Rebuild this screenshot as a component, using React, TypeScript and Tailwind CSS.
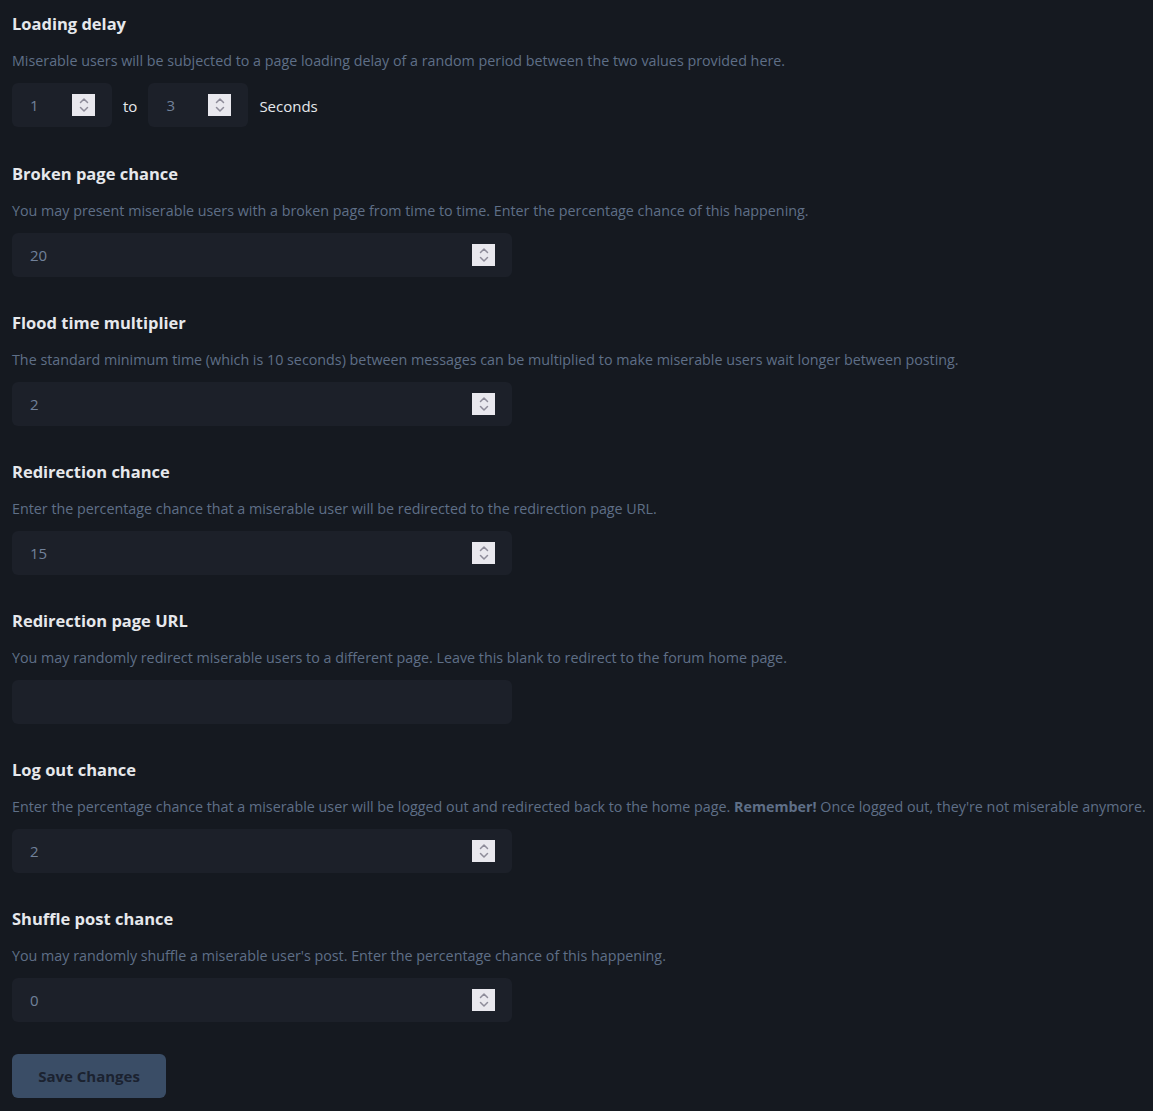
import React from "react";

const numCls =
  "h-11 rounded-md bg-[#1c2029] pl-[18px] pr-[40px] text-[15px] text-[#71819a] outline-none [appearance:textfield] [&::-webkit-inner-spin-button]:appearance-none [&::-webkit-outer-spin-button]:appearance-none";

function Spinner() {
  return (
    <div className="pointer-events-none absolute right-[17px] top-1/2 flex h-[22px] w-[23px] -translate-y-1/2 items-center justify-center bg-[#e9e8ee]">
      <svg width="12" height="16" viewBox="0 0 12 16" fill="none" stroke="#8e8c9a" strokeWidth="1.5" strokeLinecap="round" strokeLinejoin="round">
        <path d="M2.5 5.5 L6 2 L9.5 5.5" />
        <path d="M2.5 10.5 L6 14 L9.5 10.5" />
      </svg>
    </div>
  );
}

function NumInput({ value, wide = true }: { value: number; wide?: boolean }) {
  return (
    <div className={"relative " + (wide ? "w-[500px]" : "w-[100px]")}>
      <input type="number" defaultValue={value} className={numCls + " w-full"} />
      <Spinner />
    </div>
  );
}

function Section({
  title,
  desc,
  children,
}: {
  title: string;
  desc: React.ReactNode;
  children: React.ReactNode;
}) {
  return (
    <div className="flex flex-col">
      <h2 className="text-[16.5px] leading-[28px] font-bold text-[#e6e8ec]">{title}</h2>
      <p className="mt-[13px] whitespace-nowrap text-[14.3px] leading-[20px] text-[#5f6f87]">{desc}</p>
      <div className="mt-[12px]">{children}</div>
    </div>
  );
}

export default function App() {
  return (
    <div
      className="min-h-[1111px] w-full bg-[#151920] pl-[12px] pt-[10px] pb-[14px]"
      style={{ fontFamily: '"Open Sans", "Noto Sans", sans-serif' }}
    >
      <div className="flex flex-col gap-[32px]">
        <Section
          title="Loading delay"
          desc="Miserable users will be subjected to a page loading delay of a random period between the two values provided here."
        >
          <div className="mb-[1px] flex items-center">
            <NumInput value={1} wide={false} />
            <span className="mx-[11px] pt-[3px] text-[15px] text-[#e6e8ec]">to</span>
            <NumInput value={3} wide={false} />
            <span className="ml-[11px] pt-[3px] text-[15px] text-[#e6e8ec]">Seconds</span>
          </div>
        </Section>
        <Section
          title="Broken page chance"
          desc="You may present miserable users with a broken page from time to time. Enter the percentage chance of this happening."
        >
          <NumInput value={20} />
        </Section>
        <Section
          title="Flood time multiplier"
          desc="The standard minimum time (which is 10 seconds) between messages can be multiplied to make miserable users wait longer between posting."
        >
          <NumInput value={2} />
        </Section>
        <Section
          title="Redirection chance"
          desc="Enter the percentage chance that a miserable user will be redirected to the redirection page URL."
        >
          <NumInput value={15} />
        </Section>
        <Section
          title="Redirection page URL"
          desc="You may randomly redirect miserable users to a different page. Leave this blank to redirect to the forum home page."
        >
          <input
            type="text"
            defaultValue=""
            className="h-11 w-[500px] rounded-md bg-[#1c2029] px-[18px] text-[15px] text-[#71819a] outline-none"
          />
        </Section>
        <Section
          title="Log out chance"
          desc={
            <>
              Enter the percentage chance that a miserable user will be logged out and redirected back to the home page.{" "}
              <strong className="font-bold">Remember!</strong> Once logged out, they're not miserable anymore.
            </>
          }
        >
          <NumInput value={2} />
        </Section>
        <Section
          title="Shuffle post chance"
          desc="You may randomly shuffle a miserable user's post. Enter the percentage chance of this happening."
        >
          <NumInput value={0} />
        </Section>
        <div>
          <button className="h-11 w-[154px] rounded-md bg-[#3a4d66] text-[15px] font-bold text-[#1b2230]">
            Save Changes
          </button>
        </div>
      </div>
    </div>
  );
}
